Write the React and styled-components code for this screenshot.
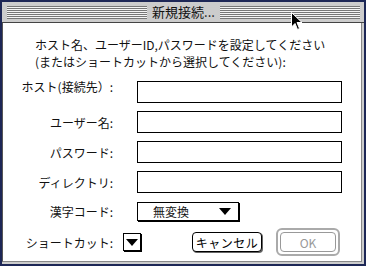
import React from 'react';
import styled, { createGlobalStyle } from 'styled-components';

const Global = createGlobalStyle`
    html, body { margin: 0; padding: 0; background: #fff; }
    body { font-family: "Noto Sans CJK JP", "Noto Sans", sans-serif; }
`;

const Window = styled.div`
    position: relative;
    width: 366px;
    height: 266px;
    box-sizing: border-box;
    border: 2px solid #1d2756;
    background: #cccccc;
    display: flex;
    flex-direction: column;
`;

const TitleBar = styled.div`
    height: 20px;
    display: flex;
    align-items: center;
    padding: 0 4px 0 5px;
    border-bottom: 1px solid #444;
    gap: 3px;
`;

const Stripes = styled.div`
    flex: 1;
    height: 13px;
    margin-top: 1px;
    background: repeating-linear-gradient(#777 0 1px, #f4f4f4 1px 2px);
`;

const TitleText = styled.div`
    font-size: 13px;
    line-height: 16px;
    color: #111;
    padding: 0 2px;
`;

const Content = styled.div`
    flex: 1;
    background: #fff;
    margin-right: 2px;
    margin-bottom: 2px;
    border-left: 1px solid #555;
    border-right: 1px solid #888;
    border-bottom: 1px solid #888;
    padding: 13px 0 0 0;
    font-size: 12px;
    color: #111;
`;

const Prompt = styled.p`
    margin: 0 0 0 32px;
    line-height: 17px;
`;

const Form = styled.div`
    display: grid;
    grid-template-columns: 110px 205px;
    grid-template-rows: 22px 22px 22px 22px 20px;
    column-gap: 24px;
    row-gap: 8px;
    margin-top: 11px;
    align-items: center;
`;

const Label = styled.div`
    text-align: right;
    align-self: ${p => (p.top ? 'start' : 'center')};
    margin-top: ${p => (p.top ? '-3px' : '0')};
    white-space: nowrap;
`;

const Field = styled.div`
    height: 22px;
    box-sizing: border-box;
    border: 1px solid #000;
    background: #fff;
`;

const PopupBox = styled.div`
    width: ${p => p.w}px;
    height: ${p => p.h}px;
    box-sizing: border-box;
    border: 1px solid #000;
    box-shadow: 1px 1px 0 #000;
    background: #fff;
    display: flex;
    align-items: center;
    justify-content: ${p => (p.w > 40 ? 'space-between' : 'center')};
    padding: ${p => (p.w > 40 ? '0 7px 0 15px' : '0')};
    margin-left: ${p => p.ml || 0}px;
`;

const Arrow = styled.span`
    width: 0;
    height: 0;
    border-left: 6px solid transparent;
    border-right: 6px solid transparent;
    border-top: 7px solid #000;
`;

const BottomRow = styled.div`
    display: flex;
    align-items: center;
    margin-top: 7px;
`;

const ShortcutLabel = styled.div`
    width: 110px;
    text-align: right;
    white-space: nowrap;
`;

const Button = styled.div`
    width: ${p => p.w}px;
    height: 20px;
    box-sizing: border-box;
    border: 1px solid ${p => (p.disabled ? '#999' : '#000')};
    border-radius: 4px;
    box-shadow: ${p => (p.disabled ? 'none' : '1px 1px 0 #666')};
    display: flex;
    align-items: center;
    justify-content: center;
    font-size: 12px;
    color: ${p => (p.disabled ? '#999' : '#000')};
    letter-spacing: ${p => (p.disabled ? '0' : '0.5px')};
    background: #fff;
    margin-left: ${p => p.ml || 0}px;
`;

const DefaultRing = styled.div`
    margin-left: 14px;
    padding: 2px;
    border: 2px solid #aaa;
    border-radius: 6px;
`;

const Cursor = styled.svg`
    position: absolute;
    left: 289px;
    top: 10px;
`;

export default function App() {
    const fields = [
        { label: 'ホスト(接続先）:', top: true },
        { label: 'ユーザー名:' },
        { label: 'パスワード:' },
        { label: 'ディレクトリ:' },
    ];
    return (
        <>
            <Global />
            <Window>
                <TitleBar>
                    <Stripes />
                    <TitleText>新規接続...</TitleText>
                    <Stripes />
                </TitleBar>
                <Content>
                    <Prompt>
                        ホスト名、ユーザーID,パスワードを設定してください<br />
                        (またはショートカットから選択してください):
                    </Prompt>
                    <Form>
                        {fields.map(f => (
                            <React.Fragment key={f.label}>
                                <Label top={f.top}>{f.label}</Label>
                                <Field />
                            </React.Fragment>
                        ))}
                        <Label>漢字コード:</Label>
                        <PopupBox w={102} h={19}>
                            <span>無変換</span>
                            <Arrow />
                        </PopupBox>
                    </Form>
                    <BottomRow>
                        <ShortcutLabel>ショートカット:</ShortcutLabel>
                        <PopupBox w={18} h={18} ml={10}>
                            <Arrow />
                        </PopupBox>
                        <Button w={70} ml={51}>キャンセル</Button>
                        <DefaultRing>
                            <Button w={56} disabled>OK</Button>
                        </DefaultRing>
                    </BottomRow>
                </Content>
                <Cursor width="12" height="19" viewBox="0 0 12 19">
                    <path d="M0.5 0.5 L0.5 15 L4 11.5 L6.5 17.5 L8.5 16.5 L6 10.5 L11 10.5 Z" fill="#000" stroke="#fff" strokeWidth="1" />
                </Cursor>
            </Window>
        </>
    );
}
